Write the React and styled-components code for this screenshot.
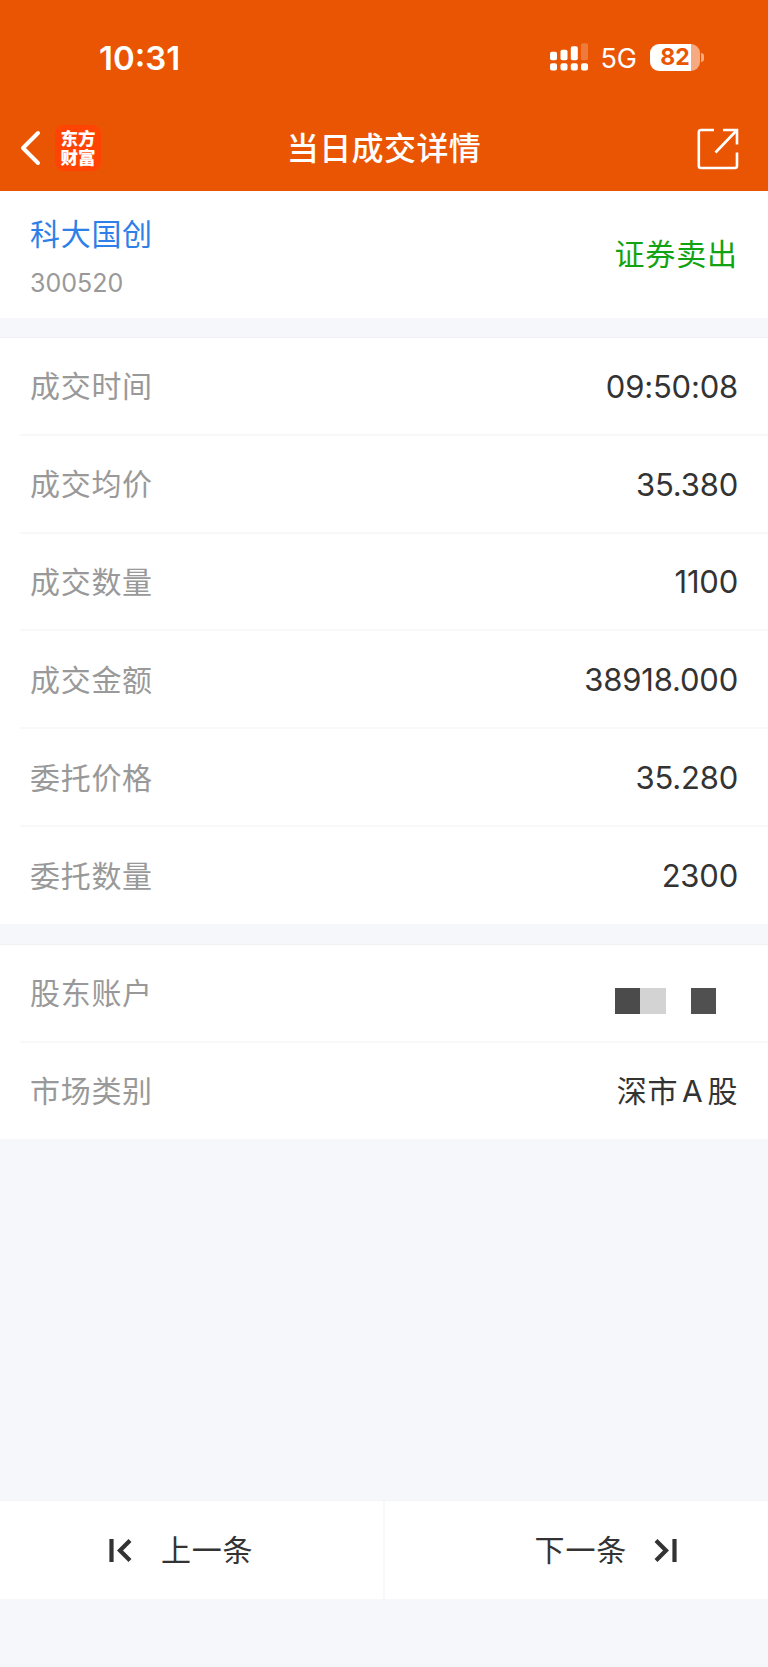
import styled, { createGlobalStyle } from "styled-components";

const GlobalStyle = createGlobalStyle`
    * {
        box-sizing: border-box;
    }
    body {
        margin: 0;
        background-color: #f6f7fa;
        font-family: Inter, "Noto Sans CJK SC", sans-serif;
    }
`

const Page = styled.div`
    display: flex;
    flex-direction: column;
    width: 768px;
    height: 1667px;
    overflow: hidden;
    background-color: #f6f7fa;
    color: #333333;
`

const Header = styled.header`
    height: 191px;
    flex: none;
    background-color: #ea5504;
    color: #ffffff;
`

const StatusBar = styled.div`
    display: flex;
    align-items: center;
    justify-content: space-between;
    height: 105px;
    padding: 9px 64px 0 99px;
`

const Clock = styled.div`
    padding-top: 1px;
    font-size: 33px;
    font-weight: 600;
    line-height: 40px;
`

const StatusIcons = styled.div`
    display: flex;
    align-items: center;
`

const Network = styled.div`
    margin-left: 12px;
    padding-top: 3px;
    font-size: 27px;
    line-height: 30px;
`

const Battery = styled.div`
    display: flex;
    align-items: center;
    justify-content: center;
    margin-left: 13px;
    width: 50px;
    height: 27px;
    border-radius: 9px;
    background: linear-gradient(to right, #ffffff 41px, #f6aa82 41px);
    color: #ea5504;
    font-size: 23px;
    font-weight: 700;
    line-height: 27px;
`

const BatteryCap = styled.div`
    margin-left: 1px;
    width: 3px;
    height: 9px;
    border-radius: 0 4px 4px 0;
    background-color: #f6aa82;
`

const NavBar = styled.div`
    display: grid;
    grid-template-columns: 1fr auto 1fr;
    align-items: center;
    height: 86px;
    padding: 0 29px 0 20px;
`

const NavLeft = styled.div`
    display: flex;
    align-items: center;
    gap: 12px;
`

const Logo = styled.div`
    width: 46px;
    height: 46px;
    padding: 3px 0;
    border-radius: 9px;
    background-color: #ff4302;
    font-family: "Noto Sans CJK SC", sans-serif;
    font-size: 17.5px;
    font-weight: 900;
    line-height: 19px;
    text-align: center;
`

const Title = styled.h1`
    margin: 0;
    padding: 0 0 4px 9px;
    font-family: "Noto Sans CJK SC", sans-serif;
    font-size: 32px;
    font-weight: 500;
    line-height: 40px;
    letter-spacing: 0.4px;
`

const NavRight = styled.div`
    display: flex;
    justify-content: flex-end;
    padding-top: 1px;
`

const Summary = styled.section`
    display: flex;
    align-items: center;
    justify-content: space-between;
    height: 127px;
    flex: none;
    padding: 0 30px;
    background-color: #ffffff;
`

const Stock = styled.div`
    padding-top: 9px;
`

const StockName = styled.div`
    font-size: 30px;
    line-height: 48px;
    letter-spacing: 0.7px;
    color: #2f7fe8;
`

const StockCode = styled.div`
    font-size: 25px;
    line-height: 50px;
    color: #999999;
`

const Side = styled.div`
    padding-bottom: 2px;
    font-size: 30px;
    line-height: 40px;
    letter-spacing: 0.9px;
    color: #11a311;
`

const Row = styled.div`
    display: flex;
    align-items: center;
    justify-content: space-between;
    height: 97.8px;
    margin-left: 20px;
    padding: 1px 30px 0 10px;
    border-bottom: 2px solid #f7f8fa;
`

const Group = styled.section`
    flex: none;
    margin-top: 19px;
    border-top: 1px solid #f0f1f3;
    background-color: #ffffff;

    & + & {
        margin-top: 20px;
    }

    ${Row}:last-child {
        height: 96.8px;
        border-bottom-width: 0;
    }
`

const Label = styled.div`
    font-size: 30px;
    line-height: 40px;
    letter-spacing: 0.7px;
    color: #999999;
`

const Value = styled.div`
    padding-top: 1px;
    font-size: 31px;
    line-height: 40px;
    letter-spacing: -0.2px;
`

const Market = styled(Value)`
    padding-top: 0;
    font-size: 30px;
    letter-spacing: 0.6px;
    word-spacing: -5px;
`

const Mosaic = styled.div`
    display: flex;
    margin: 15px 22px 0 0;
`

const Block = styled.div`
    width: 25.2px;
    height: 26px;
    background-color: ${p => p.color};
`

const Footer = styled.footer`
    display: flex;
    height: 99px;
    flex: none;
    margin-top: auto;
    margin-bottom: 68px;
    border-top: 1px solid #f3f4f6;
    background-color: #ffffff;
`

const FooterButton = styled.button`
    display: flex;
    align-items: center;
    justify-content: ${p => p.side === "left" ? "flex-start" : "flex-end"};
    gap: ${p => p.side === "left" ? "29px" : "27px"};
    width: ${p => p.side === "left" ? "385px" : "383px"};
    border: none;
    border-right: ${p => p.side === "left" ? "2px solid #f7f8fa" : "none"};
    padding: ${p => p.side === "left" ? "0 0 0 109px" : "0 91px 0 0"};
    background: none;
    color: #333333;
`

const FooterText = styled.span`
    padding-bottom: 4px;
    font-family: "Noto Sans CJK SC", sans-serif;
    font-size: 30px;
    line-height: 40px;
    letter-spacing: 0.8px;
`

const trade = [
    ["成交时间", "09:50:08"],
    ["成交均价", "35.380"],
    ["成交数量", "1100"],
    ["成交金额", "38918.000"],
    ["委托价格", "35.280"],
    ["委托数量", "2300"],
]

const mask = ["#4b4b4b", "#d3d3d3", "#ffffff", "#505050"]

const SignalIcon = () => (
    <svg width="39" height="28" viewBox="0 0 39 28" fill="#fff">
        <rect x="1" y="8.8" width="7" height="8.5" rx="1.8" />
        <rect x="11.5" y="6.8" width="7" height="10.5" rx="1.8" />
        <rect x="21.8" y="3.3" width="7" height="14" rx="1.8" />
        <rect x="32" y="0.3" width="7" height="17" rx="1.8" opacity="0.22" />
        <rect x="1" y="20.3" width="7" height="7.2" rx="2" />
        <rect x="11.5" y="20.3" width="7" height="7.2" rx="2" />
        <rect x="21.8" y="20.3" width="7" height="7.2" rx="2" />
        <rect x="32" y="20.3" width="7" height="7.2" rx="2" />
    </svg>
)

const BackIcon = () => (
    <svg width="23" height="36" viewBox="0 0 23 36" fill="none" stroke="#fff" strokeWidth="4" strokeLinecap="round" strokeLinejoin="round">
        <path d="M18 3 L3 18 L18 33" />
    </svg>
)

const ShareIcon = () => (
    <svg width="42" height="42" viewBox="0 0 42 42" fill="none" stroke="#fff" strokeWidth="2.6">
        <path d="M17 2 H4 Q1.8 2 1.8 4.2 V37.8 Q1.8 40 4 40 H37.8 Q40 40 40 37.8 V24.5" />
        <path d="M26 2 H40 V16.5 M39.5 2.5 L18.5 24.5" />
    </svg>
)

const StepIcon = ({ flip }) => (
    <svg width="23" height="23" viewBox="0 0 23 23" fill="none" stroke="#333" strokeWidth="4.2">
        <path d={flip ? "M20.5 0 V23 M2 1.5 L12 11.5 L2 21.5" : "M2.5 0 V23 M21 1.5 L11 11.5 L21 21.5"} />
    </svg>
)

const App = () => {

    return(
        <Page>
            <GlobalStyle />
            <Header>
                <StatusBar>
                    <Clock>10:31</Clock>
                    <StatusIcons>
                        <SignalIcon />
                        <Network>5G</Network>
                        <Battery>82</Battery>
                        <BatteryCap />
                    </StatusIcons>
                </StatusBar>
                <NavBar>
                    <NavLeft>
                        <BackIcon />
                        <Logo>东方<br />财富</Logo>
                    </NavLeft>
                    <Title>当日成交详情</Title>
                    <NavRight>
                        <ShareIcon />
                    </NavRight>
                </NavBar>
            </Header>

            <Summary>
                <Stock>
                    <StockName>科大国创</StockName>
                    <StockCode>300520</StockCode>
                </Stock>
                <Side>证券卖出</Side>
            </Summary>

            <Group>
                { trade.map(([label, value]) => (
                    <Row key={label}>
                        <Label>{label}</Label>
                        <Value>{value}</Value>
                    </Row>
                )) }
            </Group>

            <Group>
                <Row>
                    <Label>股东账户</Label>
                    <Mosaic>
                        { mask.map((color, i) => <Block key={i} color={color} />) }
                    </Mosaic>
                </Row>
                <Row>
                    <Label>市场类别</Label>
                    <Market>深市 A 股</Market>
                </Row>
            </Group>

            <Footer>
                <FooterButton side="left">
                    <StepIcon />
                    <FooterText>上一条</FooterText>
                </FooterButton>
                <FooterButton side="right">
                    <FooterText>下一条</FooterText>
                    <StepIcon flip />
                </FooterButton>
            </Footer>
        </Page>
    )
}
export default App
